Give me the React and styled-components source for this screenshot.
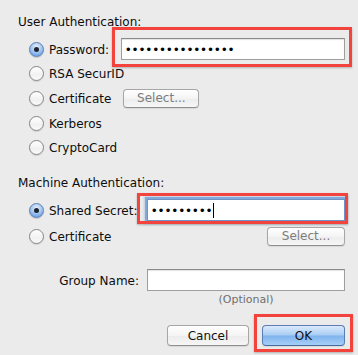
import React from "react";
import styled, { createGlobalStyle, css } from "styled-components";

const Global = createGlobalStyle`
  html, body { margin: 0; padding: 0; background: #ebebeb; }
  body { font-family: "DejaVu Sans", "Liberation Sans", sans-serif; }
  * { box-sizing: border-box; }
`;

const Sheet = styled.div`
  width: 358px;
  height: 355px;
  padding: 14px 13px 0 18px;
  display: flex;
  flex-direction: column;
  background: #ebebeb;
  color: #0d0d0d;
  font-size: 12px;
  overflow: hidden;
`;

const SectionTitle = styled.div`
  height: 16px;
  line-height: 16px;
  margin-top: ${(p) => p.$top || 0}px;
  white-space: nowrap;
`;

const OptionList = styled.div`
  display: flex;
  flex-direction: column;
  gap: 2px;
  padding-left: 11px;
  margin-top: ${(p) => p.$top || 0}px;
`;

const OptionRow = styled.div`
  display: flex;
  align-items: center;
  height: ${(p) => p.$h || 22}px;
`;

const RadioCircle = styled.span`
  position: relative;
  flex: none;
  width: 15px;
  height: 15px;
  border-radius: 50%;
  ${(p) =>
    p.$checked
      ? css`
          border: 1px solid #5b7fb4;
          background: radial-gradient(circle at 50% 30%, #e6f0fb 0%, #a9c9f0 45%, #6fa3e6 80%, #8bb8ee 100%);
          box-shadow: 0 1px 1px rgba(0, 0, 0, 0.15);
          &::after {
            content: "";
            position: absolute;
            left: 50%;
            top: 50%;
            width: 5px;
            height: 5px;
            margin: -2.5px 0 0 -2.5px;
            border-radius: 50%;
            background: #1c2430;
          }
        `
      : css`
          border: 1px solid #858585;
          background: linear-gradient(#ffffff, #f1f1f1 60%, #fafafa);
          box-shadow: 0 1px 1px rgba(0, 0, 0, 0.1);
        `}
`;

const OptionLabel = styled.span`
  margin-left: 5px;
  padding-top: 1px;
  white-space: nowrap;
`;

const Highlight = styled.div`
  position: relative;
  display: flex;
  margin-left: ${(p) => (p.$auto ? "auto" : "0")};
  &::after {
    content: "";
    position: absolute;
    top: -${(p) => p.$t}px;
    right: -${(p) => p.$r}px;
    bottom: -${(p) => p.$b}px;
    left: -${(p) => p.$l}px;
    border: 3px solid #f2433d;
    box-shadow: 0 1px 2px rgba(0, 0, 0, 0.25);
    pointer-events: none;
  }
`;

const TextField = styled.div`
  display: flex;
  align-items: center;
  width: ${(p) => p.$w}px;
  height: ${(p) => p.$h || 22}px;
  margin-left: ${(p) => (p.$auto ? "auto" : "0")};
  padding-left: 4px;
  background: #fff;
  border: 1px solid #9e9e9e;
  border-top-color: #8a8a8a;
  box-shadow: inset 0 1px 1px rgba(0, 0, 0, 0.12);
  ${(p) =>
    p.$focused &&
    css`
      border-color: #6e93c8;
      box-shadow: 0 0 0 2px rgba(120, 162, 214, 0.85), 0 0 2px 3px rgba(120, 162, 214, 0.4);
    `}
`;

const Dots = styled.span`
  font-family: "Liberation Sans", sans-serif;
  font-size: 13px;
  letter-spacing: 2.3px;
  color: #000;
  line-height: 1;
  padding-top: 1px;
`;

const Caret = styled.span`
  width: 1px;
  height: 15px;
  margin-left: -1px;
  background: #000;
`;

const PushButton = styled.button`
  flex: none;
  width: ${(p) => p.$w}px;
  height: ${(p) => p.$h || 21}px;
  margin-left: ${(p) => (p.$auto ? "auto" : `${p.$ml || 0}px`)};
  padding: 0;
  font-family: "DejaVu Sans", "Liberation Sans", sans-serif;
  font-size: 12px;
  color: ${(p) => (p.$disabled ? "#7d7d7d" : "#111")};
  border-radius: 4px;
  border: 1px solid #a6a6a6;
  border-bottom-color: #8e8e8e;
  background: linear-gradient(#ffffff, #f4f4f4 50%, #ececec 51%, #f6f6f6);
  box-shadow: 0 1px 1px rgba(0, 0, 0, 0.08);
  ${(p) =>
    p.$primary &&
    css`
      border-color: #5a7db3;
      border-bottom-color: #476a9f;
      background: linear-gradient(#dbeafb, #a9cdf4 48%, #7fb3ee 52%, #a6cff7);
    `}
`;

const GroupRow = styled.div`
  display: flex;
  align-items: center;
  justify-content: flex-end;
  gap: 8px;
  height: 22px;
  margin-top: 21px;
`;

const GroupLabel = styled.span`
  padding-top: 2px;
  white-space: nowrap;
`;

const Hint = styled.div`
  align-self: flex-end;
  width: 198px;
  margin-top: 2px;
  line-height: 14px;
  text-align: center;
  font-size: 11px;
  color: #6f6f6f;
`;

const ButtonBar = styled.div`
  display: flex;
  justify-content: flex-end;
  gap: 13px;
  margin-top: 18px;
`;

const bullets = (n) => "\u2022".repeat(n);

export default function App() {
  return (
    <>
      <Global />
      <Sheet>
        <SectionTitle>User Authentication:</SectionTitle>
        <OptionList $top={8}>
          <OptionRow $h={22}>
            <RadioCircle $checked />
            <OptionLabel>Password:</OptionLabel>
            <Highlight $auto $t={11} $r={7} $b={7} $l={9}>
              <TextField $w={224}>
                <Dots>{bullets(16)}</Dots>
              </TextField>
            </Highlight>
          </OptionRow>
          <OptionRow $h={22}>
            <RadioCircle />
            <OptionLabel>RSA SecurID</OptionLabel>
          </OptionRow>
          <OptionRow $h={24}>
            <RadioCircle />
            <OptionLabel>Certificate</OptionLabel>
            <PushButton $w={76} $h={19} $ml={12} $disabled>
              Select...
            </PushButton>
          </OptionRow>
          <OptionRow $h={22}>
            <RadioCircle />
            <OptionLabel>Kerberos</OptionLabel>
          </OptionRow>
          <OptionRow $h={22}>
            <RadioCircle />
            <OptionLabel>CryptoCard</OptionLabel>
          </OptionRow>
        </OptionList>

        <SectionTitle $top={17}>Machine Authentication:</SectionTitle>
        <OptionList $top={7}>
          <OptionRow $h={24}>
            <RadioCircle $checked />
            <OptionLabel>Shared Secret:</OptionLabel>
            <Highlight $auto $t={6} $r={3} $b={3} $l={10}>
              <TextField $w={198} $focused>
                <Dots>{bullets(9)}</Dots>
                <Caret />
              </TextField>
            </Highlight>
          </OptionRow>
          <OptionRow $h={24}>
            <RadioCircle />
            <OptionLabel>Certificate</OptionLabel>
            <PushButton $w={78} $h={19} $auto $disabled>
              Select...
            </PushButton>
          </OptionRow>
        </OptionList>

        <GroupRow>
          <GroupLabel>Group Name:</GroupLabel>
          <TextField $w={198} />
        </GroupRow>
        <Hint>(Optional)</Hint>

        <ButtonBar>
          <PushButton $w={82}>Cancel</PushButton>
          <Highlight $t={11} $r={8} $b={6} $l={8}>
            <PushButton $w={83} $primary>
              OK
            </PushButton>
          </Highlight>
        </ButtonBar>
      </Sheet>
    </>
  );
}
